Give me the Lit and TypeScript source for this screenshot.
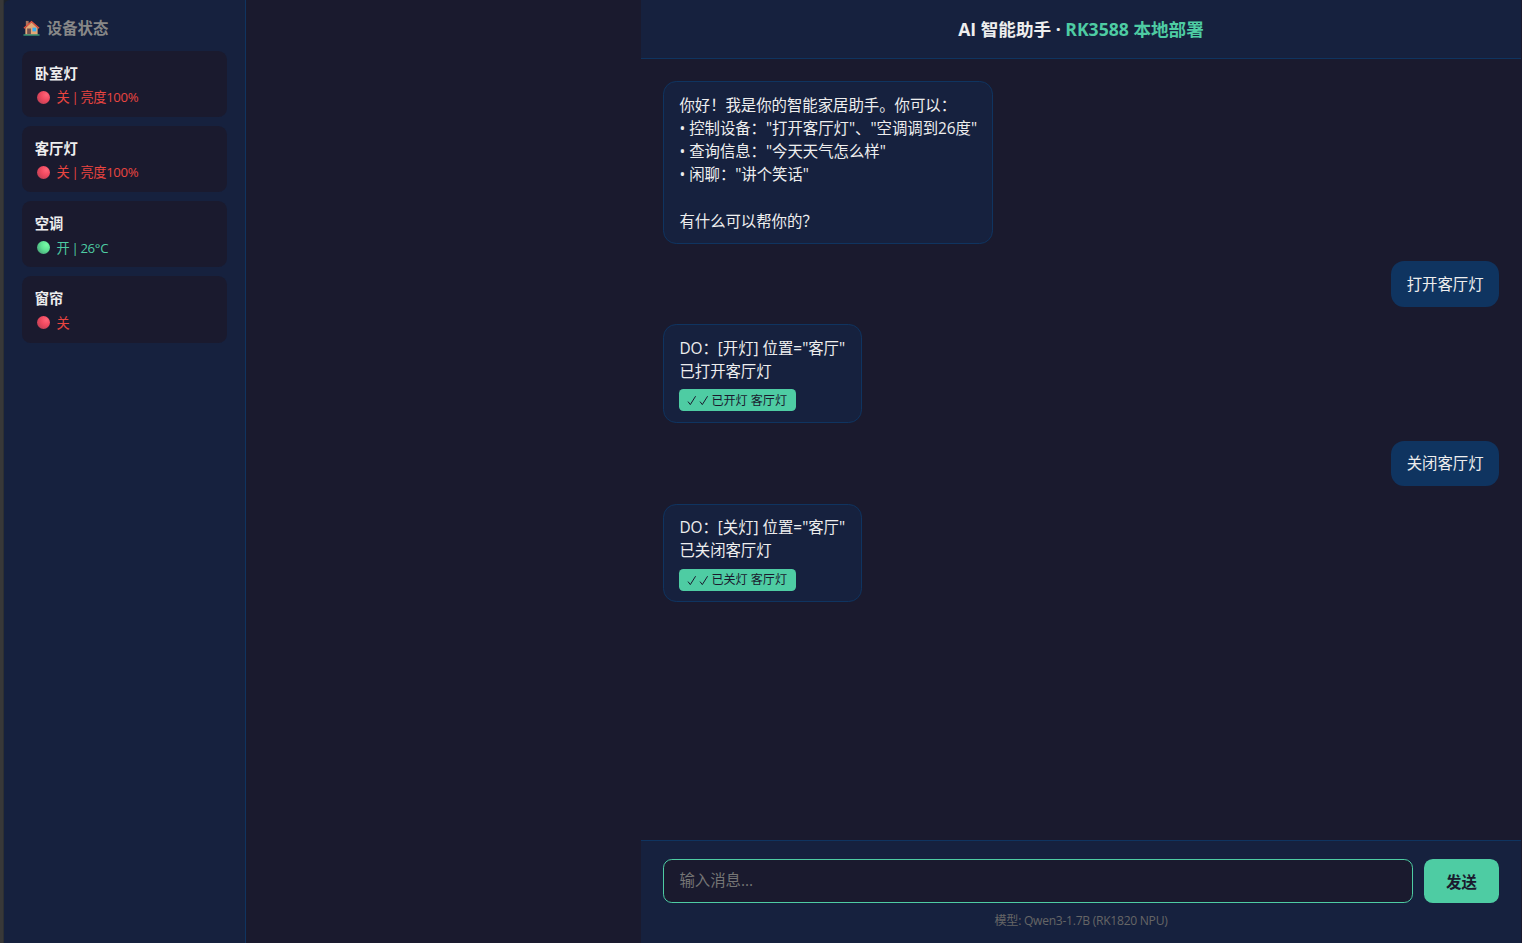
import { LitElement, html, css, svg } from "lit";
import { customElement, property } from "lit/decorators.js";

interface Device {
  name: string;
  on: boolean;
  status: string;
}

interface Message {
  from: "bot" | "user";
  lines: string[];
  tag?: string;
}

const DEVICES: Device[] = [
  { name: "卧室灯", on: false, status: "关 | 亮度100%" },
  { name: "客厅灯", on: false, status: "关 | 亮度100%" },
  { name: "空调", on: true, status: "开 | 26°C" },
  { name: "窗帘", on: false, status: "关" },
];

const MESSAGES: Message[] = [
  {
    from: "bot",
    lines: [
      "你好！我是你的智能家居助手。你可以：",
      '• 控制设备："打开客厅灯"、"空调调到26度"',
      '• 查询信息："今天天气怎么样"',
      '• 闲聊："讲个笑话"',
      "",
      "有什么可以帮你的？",
    ],
  },
  { from: "user", lines: ["打开客厅灯"] },
  { from: "bot", lines: ['DO：[开灯] 位置="客厅"', "已打开客厅灯"], tag: "已开灯 客厅灯" },
  { from: "user", lines: ["关闭客厅灯"] },
  { from: "bot", lines: ['DO：[关灯] 位置="客厅"', "已关闭客厅灯"], tag: "已关灯 客厅灯" },
];

const check = svg`<path d="M1 6.6 L3.3 9.6 L8.6 1.2" fill="none" stroke="currentColor" stroke-width="1"/>`;

@customElement("device-card")
class DeviceCard extends LitElement {
  @property({ attribute: false }) device!: Device;

  static styles = css`
    :host {
      display: block;
      box-sizing: border-box;
      height: 66.3px;
      padding: 11.8px 12.8px;
      border-radius: 8.8px;
      background: #1a1a2e;
    }
    .name {
      font-size: 14.3px;
      line-height: 22px;
      font-weight: 700;
      color: #eee;
    }
    .status {
      display: flex;
      align-items: center;
      height: 20px;
      margin-top: 2.1px;
      font-size: 13.2px;
      letter-spacing: -0.32px;
      word-spacing: -1.1px;
      white-space: pre;
      color: #e94540;
    }
    .status.on {
      color: #4ecca3;
    }
    .dot {
      width: 13px;
      height: 13px;
      margin: 1px 7px 0 1.8px;
      border-radius: 50%;
      background: radial-gradient(circle at 72% 30%, #ff6478 0, #f14a60 40%, #a93c50 100%);
    }
    .on .dot {
      background: radial-gradient(circle at 72% 30%, #77fba6 0, #5fe394 40%, #408c70 100%);
    }
  `;

  render() {
    const d = this.device;
    return html`
      <div class="name">${d.name}</div>
      <div class="status ${d.on ? "on" : ""}"><span class="dot"></span><span>${d.status}</span></div>
    `;
  }
}

@customElement("chat-bubble")
class ChatBubble extends LitElement {
  @property({ attribute: false }) message!: Message;

  static styles = css`
    :host {
      display: flex;
      font-size: 15.4px;
      line-height: 23.2px;
      color: #eee;
    }
    .bubble {
      border-radius: 13.2px;
      white-space: pre;
    }
    .bot {
      padding: 11.6px 15.4px 10px;
      background: #16213e;
      border: 1px solid #0f3460;
      letter-spacing: -0.02px;
    }
    .user {
      margin-left: auto;
      padding: 11.5px 15.4px 10.6px;
      background: #0f3460;
    }
    .line {
      height: 23.2px;
    }
    .tagrow {
      height: 28.8px;
      box-sizing: border-box;
      padding-top: 5.9px;
      display: flex;
    }
    .tag {
      display: flex;
      align-items: center;
      box-sizing: border-box;
      height: 22px;
      padding: 1px 8.8px 0 8px;
      border-radius: 4.4px;
      background: #4ecca3;
      color: #1a1a2e;
      font-size: 12.1px;
    }
    .check {
      width: 10px;
      height: 11px;
      margin-right: 2px;
    }
  `;

  render() {
    const m = this.message;
    return html`<div class="bubble ${m.from}">${m.lines.map((l) => html`<div class="line">${l}</div>`)}${m.tag
        ? html`<div class="tagrow"><div class="tag"><svg class="check" viewBox="0 0 10 11">${check}</svg><svg class="check" viewBox="0 0 10 11">${check}</svg><span>${m.tag}</span></div></div>`
        : ""}</div>`;
  }
}

@customElement("app-root")
class AppRoot extends LitElement {
  static styles = css`
    :host {
      display: flex;
      box-sizing: border-box;
      width: 100vw;
      height: 100vh;
      overflow: hidden;
      background: #1a1a2e;
      color: #eee;
      font-family: "Open Sans", "Noto Sans CJK SC", sans-serif;
    }
    .edge {
      width: 10px;
      margin-right: -6px;
      background: linear-gradient(90deg, #383838 0 3px, #2d3033 3px 4px, #1c222c 4px);
    }
    .sidebar {
      position: relative;
      box-sizing: border-box;
      width: 242px;
      padding: 16.8px 18px 0 18px;
      border-right: 1px solid #0f3460;
      border-top-left-radius: 6px;
      background: #16213e;
    }
    .side-title {
      display: flex;
      align-items: center;
      height: 22px;
      margin-bottom: 12.2px;
      font-size: 15.4px;
      font-weight: 700;
      color: #888;
    }
    .house {
      width: 17px;
      height: 16px;
      margin: 1px 6.8px 0 1px;
    }
    .devices {
      display: flex;
      flex-direction: column;
      gap: 8.8px;
    }
    .main {
      display: flex;
      flex-direction: column;
      width: 880px;
      margin-left: auto;
      margin-right: 1px;
    }
    .header {
      box-sizing: border-box;
      height: 59px;
      border-bottom: 1px solid #0f3460;
      background: #16213e;
      text-align: center;
      font-size: 17.6px;
      line-height: 59px;
      font-weight: 700;
    }
    .accent {
      color: #4ecca3;
    }
    .chat {
      flex: 1;
      display: flex;
      flex-direction: column;
      gap: 17.67px;
      padding: 22px;
    }
    .footer {
      box-sizing: border-box;
      height: 103px;
      padding: 18px 22px 0;
      border-top: 1px solid #0f3460;
      background: #16213e;
    }
    .row {
      display: flex;
      gap: 11px;
      height: 44px;
    }
    .input {
      flex: 1;
      min-width: 0;
      box-sizing: border-box;
      padding: 0 15.4px 2px;
      border: 1px solid #4ecca3;
      border-radius: 8.8px;
      outline: none;
      background: #1a1a2e;
      color: #eee;
      font: 15.4px "Open Sans", "Noto Sans CJK SC", sans-serif;
    }
    .input::placeholder {
      color: #757575;
      opacity: 1;
    }
    .send {
      width: 75px;
      padding: 0;
      border: 0;
      border-radius: 8.8px;
      background: #4ecca3;
      color: #1a1a2e;
      font: 700 15.4px "Open Sans", "Noto Sans CJK SC", sans-serif;
    }
    .model {
      margin-top: 8px;
      text-align: center;
      font-size: 12.1px;
      line-height: 20px;
      letter-spacing: -0.27px;
      color: #666;
    }
  `;

  render() {
    return html`
      <div class="edge"></div>
      <aside class="sidebar">
        <div class="side-title">
          <svg class="house" viewBox="0 0 18 16">
            <path d="M3 0.5h3v5H3z" fill="#a9745c" />
            <path d="M9 1.8 L15.5 8 V15 H2.5 V8z" fill="#e3a877" />
            <path d="M4.4 8.5h4v6.5h-4z" fill="#70504f" />
            <path d="M10 7.6h4v4h-4z" fill="#35aef0" />
            <path d="M1 8.2 L9 1.2 L17 8.2" fill="none" stroke="#e5533f" stroke-width="1.5" />
            <path d="M0.5 14.8h17v1.2h-17z" fill="#48b987" />
          </svg>
          <span>设备状态</span>
        </div>
        <div class="devices">${DEVICES.map((d) => html`<device-card .device=${d}></device-card>`)}</div>
      </aside>
      <main class="main">
        <header class="header">AI 智能助手 · <span class="accent">RK3588 本地部署</span></header>
        <section class="chat">${MESSAGES.map((m) => html`<chat-bubble .message=${m}></chat-bubble>`)}</section>
        <footer class="footer">
          <div class="row">
            <input class="input" placeholder="输入消息..." />
            <button class="send">发送</button>
          </div>
          <div class="model">模型: Qwen3-1.7B (RK1820 NPU)</div>
        </footer>
      </main>
    `;
  }
}
